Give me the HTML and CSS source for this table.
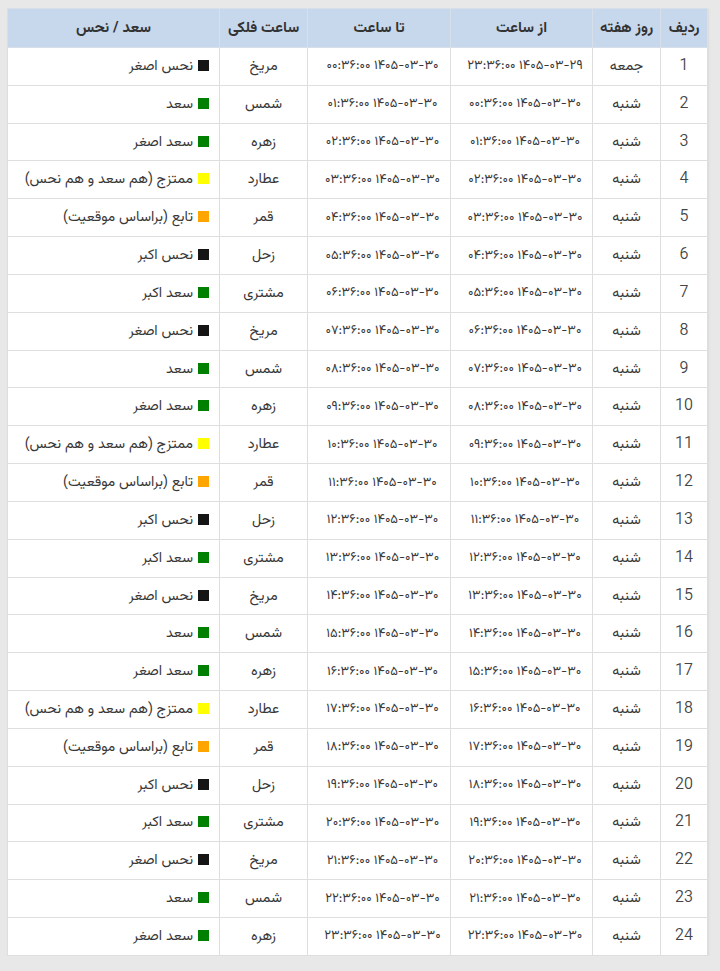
FILE: index.html
```html
<!DOCTYPE html>
<html lang="fa" dir="rtl">
<head>
<meta charset="utf-8">
<title>ساعات فلکی</title>
<link rel="stylesheet" href="styles.css">
</head>
<body>
<div class="page">
<table class="hours">
<colgroup>
<col class="c-idx"><col class="c-day"><col class="c-from"><col class="c-to"><col class="c-planet"><col class="c-luck">
</colgroup>
<thead>
<tr><th>ردیف</th><th>روز هفته</th><th>از ساعت</th><th>تا ساعت</th><th>ساعت فلکی</th><th>سعد / نحس</th></tr>
</thead>
<tbody>
<tr><td class="num">1</td><td>جمعه</td><td class="dt">۱۴۰۵-۰۳-۲۹ ۲۳:۳۶:۰۰</td><td class="dt">۱۴۰۵-۰۳-۳۰ ۰۰:۳۶:۰۰</td><td>مریخ</td><td class="luck"><span class="sq black"></span>نحس اصغر</td></tr>
<tr><td class="num">2</td><td>شنبه</td><td class="dt">۱۴۰۵-۰۳-۳۰ ۰۰:۳۶:۰۰</td><td class="dt">۱۴۰۵-۰۳-۳۰ ۰۱:۳۶:۰۰</td><td>شمس</td><td class="luck"><span class="sq green"></span>سعد</td></tr>
<tr><td class="num">3</td><td>شنبه</td><td class="dt">۱۴۰۵-۰۳-۳۰ ۰۱:۳۶:۰۰</td><td class="dt">۱۴۰۵-۰۳-۳۰ ۰۲:۳۶:۰۰</td><td>زهره</td><td class="luck"><span class="sq green"></span>سعد اصغر</td></tr>
<tr><td class="num">4</td><td>شنبه</td><td class="dt">۱۴۰۵-۰۳-۳۰ ۰۲:۳۶:۰۰</td><td class="dt">۱۴۰۵-۰۳-۳۰ ۰۳:۳۶:۰۰</td><td>عطارد</td><td class="luck"><span class="sq yellow"></span>ممتزج (هم سعد و هم نحس)</td></tr>
<tr><td class="num">5</td><td>شنبه</td><td class="dt">۱۴۰۵-۰۳-۳۰ ۰۳:۳۶:۰۰</td><td class="dt">۱۴۰۵-۰۳-۳۰ ۰۴:۳۶:۰۰</td><td>قمر</td><td class="luck"><span class="sq orange"></span>تابع (براساس موقعیت)</td></tr>
<tr><td class="num">6</td><td>شنبه</td><td class="dt">۱۴۰۵-۰۳-۳۰ ۰۴:۳۶:۰۰</td><td class="dt">۱۴۰۵-۰۳-۳۰ ۰۵:۳۶:۰۰</td><td>زحل</td><td class="luck"><span class="sq black"></span>نحس اکبر</td></tr>
<tr><td class="num">7</td><td>شنبه</td><td class="dt">۱۴۰۵-۰۳-۳۰ ۰۵:۳۶:۰۰</td><td class="dt">۱۴۰۵-۰۳-۳۰ ۰۶:۳۶:۰۰</td><td>مشتری</td><td class="luck"><span class="sq green"></span>سعد اکبر</td></tr>
<tr><td class="num">8</td><td>شنبه</td><td class="dt">۱۴۰۵-۰۳-۳۰ ۰۶:۳۶:۰۰</td><td class="dt">۱۴۰۵-۰۳-۳۰ ۰۷:۳۶:۰۰</td><td>مریخ</td><td class="luck"><span class="sq black"></span>نحس اصغر</td></tr>
<tr><td class="num">9</td><td>شنبه</td><td class="dt">۱۴۰۵-۰۳-۳۰ ۰۷:۳۶:۰۰</td><td class="dt">۱۴۰۵-۰۳-۳۰ ۰۸:۳۶:۰۰</td><td>شمس</td><td class="luck"><span class="sq green"></span>سعد</td></tr>
<tr><td class="num">10</td><td>شنبه</td><td class="dt">۱۴۰۵-۰۳-۳۰ ۰۸:۳۶:۰۰</td><td class="dt">۱۴۰۵-۰۳-۳۰ ۰۹:۳۶:۰۰</td><td>زهره</td><td class="luck"><span class="sq green"></span>سعد اصغر</td></tr>
<tr><td class="num">11</td><td>شنبه</td><td class="dt">۱۴۰۵-۰۳-۳۰ ۰۹:۳۶:۰۰</td><td class="dt">۱۴۰۵-۰۳-۳۰ ۱۰:۳۶:۰۰</td><td>عطارد</td><td class="luck"><span class="sq yellow"></span>ممتزج (هم سعد و هم نحس)</td></tr>
<tr><td class="num">12</td><td>شنبه</td><td class="dt">۱۴۰۵-۰۳-۳۰ ۱۰:۳۶:۰۰</td><td class="dt">۱۴۰۵-۰۳-۳۰ ۱۱:۳۶:۰۰</td><td>قمر</td><td class="luck"><span class="sq orange"></span>تابع (براساس موقعیت)</td></tr>
<tr><td class="num">13</td><td>شنبه</td><td class="dt">۱۴۰۵-۰۳-۳۰ ۱۱:۳۶:۰۰</td><td class="dt">۱۴۰۵-۰۳-۳۰ ۱۲:۳۶:۰۰</td><td>زحل</td><td class="luck"><span class="sq black"></span>نحس اکبر</td></tr>
<tr><td class="num">14</td><td>شنبه</td><td class="dt">۱۴۰۵-۰۳-۳۰ ۱۲:۳۶:۰۰</td><td class="dt">۱۴۰۵-۰۳-۳۰ ۱۳:۳۶:۰۰</td><td>مشتری</td><td class="luck"><span class="sq green"></span>سعد اکبر</td></tr>
<tr><td class="num">15</td><td>شنبه</td><td class="dt">۱۴۰۵-۰۳-۳۰ ۱۳:۳۶:۰۰</td><td class="dt">۱۴۰۵-۰۳-۳۰ ۱۴:۳۶:۰۰</td><td>مریخ</td><td class="luck"><span class="sq black"></span>نحس اصغر</td></tr>
<tr><td class="num">16</td><td>شنبه</td><td class="dt">۱۴۰۵-۰۳-۳۰ ۱۴:۳۶:۰۰</td><td class="dt">۱۴۰۵-۰۳-۳۰ ۱۵:۳۶:۰۰</td><td>شمس</td><td class="luck"><span class="sq green"></span>سعد</td></tr>
<tr><td class="num">17</td><td>شنبه</td><td class="dt">۱۴۰۵-۰۳-۳۰ ۱۵:۳۶:۰۰</td><td class="dt">۱۴۰۵-۰۳-۳۰ ۱۶:۳۶:۰۰</td><td>زهره</td><td class="luck"><span class="sq green"></span>سعد اصغر</td></tr>
<tr><td class="num">18</td><td>شنبه</td><td class="dt">۱۴۰۵-۰۳-۳۰ ۱۶:۳۶:۰۰</td><td class="dt">۱۴۰۵-۰۳-۳۰ ۱۷:۳۶:۰۰</td><td>عطارد</td><td class="luck"><span class="sq yellow"></span>ممتزج (هم سعد و هم نحس)</td></tr>
<tr><td class="num">19</td><td>شنبه</td><td class="dt">۱۴۰۵-۰۳-۳۰ ۱۷:۳۶:۰۰</td><td class="dt">۱۴۰۵-۰۳-۳۰ ۱۸:۳۶:۰۰</td><td>قمر</td><td class="luck"><span class="sq orange"></span>تابع (براساس موقعیت)</td></tr>
<tr><td class="num">20</td><td>شنبه</td><td class="dt">۱۴۰۵-۰۳-۳۰ ۱۸:۳۶:۰۰</td><td class="dt">۱۴۰۵-۰۳-۳۰ ۱۹:۳۶:۰۰</td><td>زحل</td><td class="luck"><span class="sq black"></span>نحس اکبر</td></tr>
<tr><td class="num">21</td><td>شنبه</td><td class="dt">۱۴۰۵-۰۳-۳۰ ۱۹:۳۶:۰۰</td><td class="dt">۱۴۰۵-۰۳-۳۰ ۲۰:۳۶:۰۰</td><td>مشتری</td><td class="luck"><span class="sq green"></span>سعد اکبر</td></tr>
<tr><td class="num">22</td><td>شنبه</td><td class="dt">۱۴۰۵-۰۳-۳۰ ۲۰:۳۶:۰۰</td><td class="dt">۱۴۰۵-۰۳-۳۰ ۲۱:۳۶:۰۰</td><td>مریخ</td><td class="luck"><span class="sq black"></span>نحس اصغر</td></tr>
<tr><td class="num">23</td><td>شنبه</td><td class="dt">۱۴۰۵-۰۳-۳۰ ۲۱:۳۶:۰۰</td><td class="dt">۱۴۰۵-۰۳-۳۰ ۲۲:۳۶:۰۰</td><td>شمس</td><td class="luck"><span class="sq green"></span>سعد</td></tr>
<tr><td class="num">24</td><td>شنبه</td><td class="dt">۱۴۰۵-۰۳-۳۰ ۲۲:۳۶:۰۰</td><td class="dt">۱۴۰۵-۰۳-۳۰ ۲۳:۳۶:۰۰</td><td>زهره</td><td class="luck"><span class="sq green"></span>سعد اصغر</td></tr>
</tbody>
</table>
</div>
</body>
</html>
```
FILE: styles.css
```css
html, body {
  margin: 0;
  padding: 0;
  background: #e8e8e8;
}
body {
  font-family: "Vazirmatn", "DejaVu Sans", sans-serif;
  color: #333;
}
.page {
  padding: 8px 12px 0 12px;
}
.hours {
  direction: rtl;
  border-collapse: collapse;
  table-layout: fixed;
  width: 700px;
  background: #fff;
  box-shadow: 1px 1px 2px rgba(0,0,0,0.06);
}
.c-idx { width: 47px; }
.c-day { width: 68px; }
.c-from { width: 142px; }
.c-to { width: 143px; }
.c-planet { width: 88px; }
.c-luck { width: 212px; }
.hours th {
  background: #c7d8ec;
  font-weight: 700;
  font-size: 15px;
  height: 38px;
  padding: 0;
  border: 1px solid #d6dfea;
  text-align: center;
  color: #333;
}
.hours td {
  font-size: 14.3px;
  font-weight: 370;
  height: 36.83px;
  padding: 0;
  border: 1px solid #dedede;
  text-align: center;
  white-space: nowrap;
  color: #383838;
}
.hours td.dt {
  font-size: 13px;
  padding-left: 7px;
}
.hours td.num {
  font-size: 16px;
  font-weight: 300;
  color: #444;
}
.hours td.luck {
  text-align: right;
  padding-right: 10px;
}
.sq {
  display: inline-block;
  width: 11px;
  height: 11px;
  margin-left: 5px;
  vertical-align: -1px;
}
.black { background: #151515; }
.green { background: #008000; }
.yellow { background: #ffff00; }
.orange { background: #ffa500; }
```
